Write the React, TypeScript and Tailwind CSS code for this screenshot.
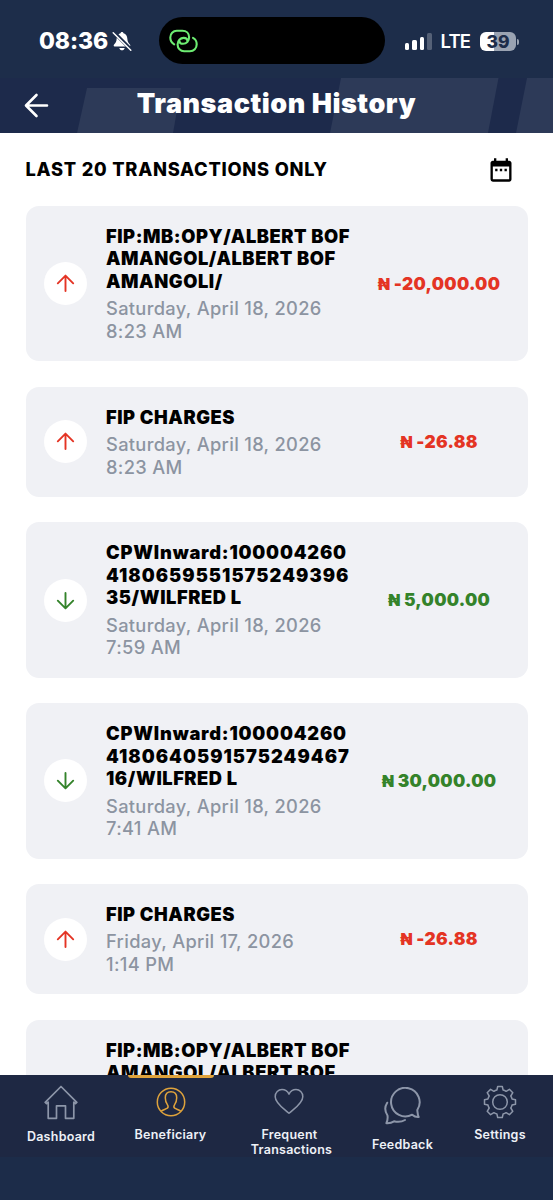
import type { ReactNode } from "react";
import clsx from "clsx";
import { MdDateRange } from "react-icons/md";

interface Transaction {
  id: number;
  lines: string[];
  date: string;
  time: string;
  amount: string;
  type: "debit" | "credit";
}

const transactions: Transaction[] = [
  {
    id: 1,
    lines: ["FIP:MB:OPY/ALBERT BOF", "AMANGOL/ALBERT BOF", "AMANGOLI/"],
    date: "Saturday, April 18, 2026",
    time: "8:23 AM",
    amount: "-20,000.00",
    type: "debit",
  },
  {
    id: 2,
    lines: ["FIP CHARGES"],
    date: "Saturday, April 18, 2026",
    time: "8:23 AM",
    amount: "-26.88",
    type: "debit",
  },
  {
    id: 3,
    lines: ["CPWInward:100004260", "4180659551575249396", "35/WILFRED L"],
    date: "Saturday, April 18, 2026",
    time: "7:59 AM",
    amount: "5,000.00",
    type: "credit",
  },
  {
    id: 4,
    lines: ["CPWInward:100004260", "4180640591575249467", "16/WILFRED L"],
    date: "Saturday, April 18, 2026",
    time: "7:41 AM",
    amount: "30,000.00",
    type: "credit",
  },
  {
    id: 5,
    lines: ["FIP CHARGES"],
    date: "Friday, April 17, 2026",
    time: "1:14 PM",
    amount: "-26.88",
    type: "debit",
  },
];

const StatusBar = () => {
  return (
    <div className="flex h-[78px] items-start bg-[#1d2d4a] pt-[17px]">
      <div className="flex h-[47px] w-[159px] shrink-0 items-center pt-[2px] pl-[39px] text-white">
        <span className="w-[69px] text-[23px] leading-none font-extrabold tracking-[-0.100px]">
          08:36
        </span>
        <svg width="20" height="21" viewBox="0 0 20 21" className="ml-[4px] shrink-0">
          <path
            d="M10 1c-.9 0-1.4.6-1.500 1.300C6 3 4.800 5 4.700 7.500c-.2 3.300-.9 4.300-2.600 6-.6.6-.6 2 .5 2h14.800c1.100 0 1.100-1.400.5-2-1.700-1.700-2.400-2.700-2.600-6C15.200 5 14 3 11.500 2.300 11.400 1.600 10.900 1 10 1zM7.300 17c.4 1.500 1.400 2.300 2.700 2.300s2.300-.8 2.700-2.300z"
            fill="#fff"
          />
          <path d="M1.800 1.200 19 18.600" stroke="#1d2d4a" strokeWidth="3.600" />
          <path d="M1.200 1.800 18.800 19.200" stroke="#fff" strokeWidth="1.500" strokeLinecap="round" />
        </svg>
      </div>

      <div className="flex h-[47px] w-[226px] shrink-0 items-center rounded-full bg-black pl-[10px]">
        <svg
          width="29"
          height="24"
          viewBox="0 0 29 24"
          fill="none"
          stroke="#6dec72"
          strokeWidth="2.100"
          strokeLinecap="round"
        >
          <path d="M5.200 15.300C2.700 13.900 1.300 11.300 1.300 8.500 1.300 4.700 4 1.800 7.800 1.800h5.600c3.900 0 6.700 2.700 6.700 6.500s-2.700 6.500-6 6.500c-2.300 0-3.600-1.100-3.600-2.600" />
          <path d="M24 8.900c2.400 1.200 3.700 3.700 3.700 6.300 0 4-2.800 7-6.800 7h-5.800c-3.700 0-6.500-2.800-6.500-6.600s2.700-6.700 6.100-6.700c2.300 0 3.600 1.100 3.600 2.700" />
        </svg>
      </div>

      <div className="flex h-[47px] items-center pt-[2px] pl-[19.500px] text-white">
        <div className="flex h-[17px] items-end gap-[3px]">
          <div className="h-[7px] w-[4.500px] rounded-[1.500px] bg-white" />
          <div className="h-[10px] w-[4.500px] rounded-[1.500px] bg-white" />
          <div className="h-[13px] w-[4.500px] rounded-[1.500px] bg-white" />
          <div className="h-[17px] w-[4.500px] rounded-[1.500px] bg-white/25" />
        </div>
        <span className="ml-[9px] w-[29px] text-[18.500px] leading-none font-semibold tracking-[-0.800px]">
          LTE
        </span>
        <div className="ml-[10.500px] flex h-[19px] w-[36px] items-center justify-center rounded-[6px] bg-[linear-gradient(90deg,#fff_39%,#9aa3b2_39%)] text-[17.500px] leading-none font-extrabold text-[#1d2d4a]">
          39
        </div>
        <div className="ml-[1px] h-[6px] w-[2px] rounded-r-full bg-[#9aa3b2]" />
      </div>
    </div>
  );
};

const Header = () => {
  return (
    <div className="relative flex h-[55px] items-center justify-center bg-[#1d2a4b]">
      <svg className="absolute inset-0" width="553" height="55" viewBox="0 0 553 55" fill="#2d3a58">
        <path d="M87 10H181L173 55H77z" />
        <path d="M341 0H498.500L488 55H330z" />
        <path d="M527 0H553V55H516z" />
      </svg>
      <svg
        className="absolute top-[15px] left-[23px]"
        width="27"
        height="25"
        viewBox="0 0 27 25"
        fill="none"
        stroke="#fff"
        strokeWidth="2.600"
        strokeLinecap="round"
        strokeLinejoin="round"
      >
        <path d="M13.500 2 3 12.500 13.500 23M3.500 12.500H24" />
      </svg>
      <h1 className="relative pb-[4px] text-[27px] leading-none font-black tracking-[0.530px] whitespace-nowrap text-white">
        Transaction History
      </h1>
    </div>
  );
};

// account numbers are set wider than the rest of the narration
const lineTracking = (line: string) =>
  clsx(
    /^\d{10,}$/.test(line) && "tracking-[1.040px]",
    /:\d{9}$/.test(line) && "tracking-[0.800px]",
  );

const TransactionCard = ({ lines, date, time, amount, type }: Transaction) => {
  const debit = type === "debit";

  return (
    <div className="flex items-center rounded-[13px] bg-[#f0f1f5] py-[18.800px] pl-[18.500px]">
      <div className="flex size-[43px] shrink-0 items-center justify-center rounded-full bg-white">
        <svg
          width="19"
          height="19"
          viewBox="0 0 19 19"
          fill="none"
          stroke={debit ? "#e43424" : "#34832a"}
          strokeWidth="1.900"
          strokeLinecap="round"
          strokeLinejoin="round"
        >
          {debit ? (
            <path d="M9.500 17V1.700M1.800 9.300 9.500 1.600 17.200 9.300" />
          ) : (
            <path d="M9.500 2V17.300M1.800 9.700 9.500 17.400 17.200 9.700" />
          )}
        </svg>
      </div>

      <div className="ml-[19px] w-[246px] shrink-0 text-[18.300px] leading-[22.620px] whitespace-nowrap">
        <div className="font-black tracking-[0.550px] text-black">
          {lines.map((line) => (
            <p key={line} className={lineTracking(line)}>
              {line}
            </p>
          ))}
        </div>
        <div className="mt-[4.700px] font-medium tracking-[0.320px] text-[#8c94a1]">
          <p>{date}</p>
          <p>{time}</p>
        </div>
      </div>

      <div
        className={clsx(
          "w-[174px] text-center text-[17.300px] font-black tracking-[0.300px]",
          debit ? "text-[#e43424]" : "text-[#34832a]",
        )}
      >
        <span className="text-[16px]">₦</span> {amount}
      </div>
    </div>
  );
};

interface NavItemProps {
  label: ReactNode;
  className: string;
  children: ReactNode;
}

const NavItem = ({ label, className, children }: NavItemProps) => {
  return (
    <div className={clsx("flex shrink-0 flex-col items-center", className)}>
      {children}
      <span className="text-center text-[12.500px] leading-[15px] font-semibold tracking-[0.250px] whitespace-nowrap text-[#eef1f7]">
        {label}
      </span>
    </div>
  );
};

const BottomNav = () => {
  return (
    <nav className="h-[125px] shrink-0 bg-[linear-gradient(#1e2843_82px,#1c2c49_82px)] pl-[6px]">
      <div className="flex items-start">
        <NavItem label="Dashboard" className="w-[110px] pt-[10px]">
          <svg
            className="mb-[9px]"
            width="34"
            height="35"
            viewBox="0 0 34 35"
            fill="none"
            stroke="#8d96a9"
            strokeWidth="1.700"
            strokeLinejoin="round"
          >
            <path d="M1.200 17.400 17 1.500 32.800 17.400 31.500 18.500 29.800 17.200V33.300H21.500V20.800H12.500V33.300H4.200V17.200L2.500 18.500z" />
          </svg>
        </NavItem>

        <NavItem label="Beneficiary" className="relative w-[109px] pt-[12px]">
          <div className="absolute top-0 left-[12px] h-[3px] w-[86px] rounded-b-[3px] bg-[#dfa33c]" />
          <svg
            className="mb-[10px]"
            width="30"
            height="30"
            viewBox="0 0 30 30"
            fill="none"
            stroke="#dfa33c"
            strokeWidth="1.500"
            strokeLinejoin="round"
          >
            <circle cx="15" cy="15" r="13.700" />
            <path d="M5 24.300c1.500-1.400 4.700-2 6.300-3.100 1-.8.9-2.200.2-3.300-1.500-2-2.200-4.400-2.200-7.200 0-3.700 2.200-6 5.700-6s5.700 2.300 5.700 6c0 2.800-.7 5.200-2.200 7.200-.7 1.100-.8 2.500.2 3.300 1.600 1.100 4.800 1.700 6.300 3.100" />
          </svg>
        </NavItem>

        <NavItem
          label={
            <>
              <span className="mr-[2px]">Frequent</span>
              <br />
              <span className="ml-[2px]">Transactions</span>
            </>
          }
          className="w-[131px] pt-[13px]"
        >
          <svg
            className="mr-[3px] mb-[12px]"
            width="30"
            height="27"
            viewBox="0 0 30 27"
            fill="none"
            stroke="#8d96a9"
            strokeWidth="1.500"
            strokeLinejoin="round"
          >
            <path d="M15 25.300C10.500 21 1.200 15.500 1.200 8.700 1.200 4.500 4.300 1.600 8 1.600c3 0 5.500 1.600 7 4.500 1.500-2.900 4-4.500 7-4.500 3.700 0 6.800 2.900 6.800 7.100C28.800 15.500 19.500 21 15 25.300z" />
          </svg>
        </NavItem>

        <NavItem label="Feedback" className="w-[93px] pt-[12px]">
          <svg
            className="mb-[12px]"
            width="37"
            height="38"
            viewBox="0 0 37 38"
            fill="none"
            stroke="#8d96a9"
            strokeWidth="2"
            strokeLinecap="round"
            strokeLinejoin="round"
          >
            <path d="M33.300 23A14.300 14.300 0 1 0 28.200 27.700C30.200 29.500 32.200 30.300 34.700 30 33.600 28 33.600 25.500 33.300 23z" />
            <path d="M3.200 15.700C.6 19.800.8 24.500 3.500 28.500 3.900 31.300 3.500 33.700 2.400 36.200c2.800.2 5.400-.4 7.600-1.900 3.900 1 7.700.7 11-1.300" />
          </svg>
        </NavItem>

        <NavItem label="Settings" className="w-[102px] pt-[10px]">
          <svg
            className="mb-[8px]"
            width="34"
            height="34"
            viewBox="0 0 34 34"
            fill="none"
            stroke="#8d96a9"
            strokeWidth="1.500"
            strokeLinejoin="round"
          >
            <circle cx="17" cy="17" r="7.300" />
            <path d="M14.700 1.500h4.600l.8 3.500q1.700.4 3 1.300l3.300-2 3.400 3.400-2 3.300q.9 1.300 1.200 2.900l3.500.8v4.600l-3.500.8q-.4 1.600-1.200 2.900l2 3.300-3.400 3.400-3.300-2q-1.300.9-3 1.300l-.8 3.500h-4.600l-.8-3.500q-1.700-.4-3-1.300l-3.300 2-3.400-3.400 2-3.300q-.9-1.300-1.200-2.900l-3.500-.8v-4.600l3.500-.8q.4-1.600 1.200-2.900l-2-3.300 3.400-3.400 3.300 2q1.300-.9 3-1.300z" />
          </svg>
        </NavItem>
      </div>
    </nav>
  );
};

export default function App() {
  return (
    <div className="flex h-[1200px] w-[553px] flex-col overflow-hidden bg-white font-['Inter','Liberation_Sans',sans-serif]">
      <StatusBar />
      <Header />

      <main className="min-h-0 flex-1 overflow-hidden px-[25.500px]">
        <div className="flex h-[73px] items-center justify-between pr-[12.500px]">
          <h2 className="text-[18.300px] leading-none font-extrabold tracking-[0.740px] whitespace-nowrap text-black">
            LAST 20 TRANSACTIONS ONLY
          </h2>
          <MdDateRange className="size-[28px] text-black" />
        </div>
        <div className="flex flex-col gap-[25.450px]">
          {transactions.map((transaction) => (
            <TransactionCard key={transaction.id} {...transaction} />
          ))}

          {/* next entry, cut by the bottom bar */}
          <div className="h-[155px] shrink-0 rounded-[13px] bg-[#f0f1f5] pt-[18.800px] pl-[80.500px] text-[18.300px] leading-[22.620px] font-black tracking-[0.550px] whitespace-nowrap text-black">
            <p>FIP:MB:OPY/ALBERT BOF</p>
            <p>AMANGOL/ALBERT BOF</p>
          </div>
        </div>
      </main>

      <BottomNav />
    </div>
  );
}
